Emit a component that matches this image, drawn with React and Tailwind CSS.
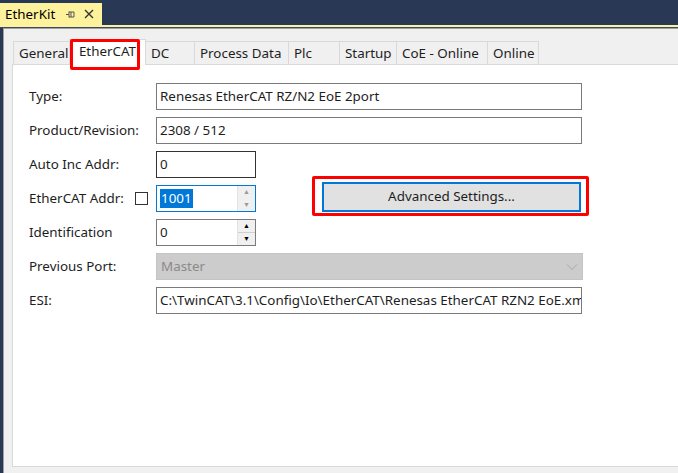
import React from "react";

const tabs = [
  { label: "General", w: 57 },
  { label: "EtherCAT", w: 77, active: true },
  { label: "DC", w: 50 },
  { label: "Process Data", w: 95 },
  { label: "Plc", w: 52 },
  { label: "Startup", w: 58 },
  { label: "CoE - Online", w: 92 },
  { label: "Online", w: 52 },
];

function TextBox({ value, className = "" }) {
  return (
    <div
      className={`h-[27px] border border-[#7a7a7a] bg-white px-[3px] flex items-center overflow-hidden whitespace-nowrap ${className}`}
    >
      {value}
    </div>
  );
}

function Spinner({ value, selected }) {
  return (
    <div
      className={`h-[27px] w-[100px] flex bg-white border ${
        selected ? "border-[#0078d7]" : "border-[#7a7a7a]"
      }`}
    >
      <div className="flex-1 flex items-center px-[3px]">
        {selected ? (
          <span className="bg-[#0078d7] text-white leading-[19px] px-[1px]">{value}</span>
        ) : (
          value
        )}
      </div>
      <div className="w-[18px] flex flex-col border-l border-[#e3e3e3]">
        <div
          className={`flex-1 flex items-center justify-center text-[7px] ${
            selected ? "bg-[#f0f0f0] text-[#9a9a9a]" : "bg-[#f0f0f0] border-b border-[#cfcfcf] text-black"
          }`}
        >
          ▲
        </div>
        <div
          className={`flex-1 flex items-center justify-center text-[7px] ${
            selected ? "bg-[#f0f0f0] text-[#9a9a9a]" : "bg-[#f0f0f0] text-black"
          }`}
        >
          ▼
        </div>
      </div>
    </div>
  );
}

function Row({ label, children }) {
  return (
    <div className="h-[27px] flex items-center">
      <div className="w-[127px] shrink-0">{label}</div>
      {children}
    </div>
  );
}

export default function App() {
  return (
    <div
      className="w-[678px] h-[473px] overflow-hidden bg-[#293955] flex flex-col text-[13.4px] text-[#1e1e1e]"
      style={{ fontFamily: '"Noto Sans", "Liberation Sans", sans-serif' }}
    >
      <div className="h-[25px] flex items-end">
        <div className="h-[22px] w-[102px] bg-[#fff29d] flex items-center pl-[5px] text-black">
          <span>EtherKit</span>
          <svg className="ml-[10px]" width="11" height="11" viewBox="0 0 11 11">
            <path d="M1 5.5h3M4 2.5v6M4 3h5v5H4M6 3v5" stroke="#555" strokeWidth="1" fill="none" />
          </svg>
          <svg className="ml-[8px]" width="10" height="10" viewBox="0 0 10 10">
            <path d="M1 1l8 8M9 1l-8 8" stroke="#333" strokeWidth="1.4" />
          </svg>
        </div>
      </div>
      <div className="h-[2px] bg-[#fff29d]" />
      <div className="h-[1px] bg-[#3b4a66]" />
      <div className="flex-1 flex">
        <div className="w-[3px] bg-[#293955]" />
        <div className="flex-1 bg-[#f0f0f0] border-l border-t border-[#a0a0a0] flex flex-col pt-[10px] pl-[8px]">
          <div className="h-[25px] flex items-end pl-[2px] relative z-10">
            {tabs.map((t) =>
              t.active ? (
                <div
                  key={t.label}
                  className="relative h-[26px] -mb-[1px] -ml-[1px] bg-white border border-b-0 border-[#d9d9d9] flex items-start pt-[1px] justify-center"
                  style={{ width: t.w }}
                >
                  {t.label}
                  <div className="absolute left-[0px] top-[-1px] w-[70px] h-[31px] border-[3px] border-[#ff0000] rounded-[2px]" />
                </div>
              ) : (
                <div
                  key={t.label}
                  className="h-[23px] bg-[#f0f0f0] border border-b-0 border-[#d9d9d9] -ml-[1px] flex items-center pl-[5px]"
                  style={{ width: t.w }}
                >
                  {t.label}
                </div>
              )
            )}
          </div>
          <div className="flex-1 bg-white border border-[#d9d9d9] border-r-0 mb-[6px] pl-[16px] pt-[18px] flex flex-col gap-[7px]">
            <Row label="Type:">
              <TextBox className="w-[426px]" value="Renesas EtherCAT RZ/N2 EoE 2port" />
            </Row>
            <Row label="Product/Revision:">
              <TextBox className="w-[426px]" value="2308 / 512" />
            </Row>
            <Row label="Auto Inc Addr:">
              <TextBox className="w-[100px] border-[#333]" value="0" />
            </Row>
            <div className="h-[27px] flex items-center">
              <div className="w-[106px] shrink-0">EtherCAT Addr:</div>
              <div className="w-[13px] h-[13px] border border-[#333] bg-white mr-[8px]" />
              <Spinner value="1001" selected />
              <div className="relative ml-[66px] w-[259px] h-[30px] -mt-[4px] border-2 border-[#0078d7] bg-[#e1e1e1] flex items-center justify-center">
                Advanced Settings...
                <div className="absolute left-[-12px] right-[-10px] top-[-8px] bottom-[-6px] border-[3px] border-[#ff0000] rounded-[2px]" />
              </div>
            </div>
            <Row label="Identification">
              <Spinner value="0" />
            </Row>
            <Row label="Previous Port:">
              <div className="w-[427px] h-[27px] bg-[#cccccc] border border-[#c4c4c4] flex items-center justify-between px-[4px] text-[#8a8a8a]">
                <span>Master</span>
                <svg width="12" height="8" viewBox="0 0 12 8">
                  <path d="M1 1.5l5 5 5-5" stroke="#a8a8a8" strokeWidth="1" fill="none" />
                </svg>
              </div>
            </Row>
            <Row label="ESI:">
              <TextBox
                className="w-[426px]"
                value="C:\TwinCAT\3.1\Config\Io\EtherCAT\Renesas EtherCAT RZN2 EoE.xml"
              />
            </Row>
          </div>
        </div>
      </div>
    </div>
  );
}
